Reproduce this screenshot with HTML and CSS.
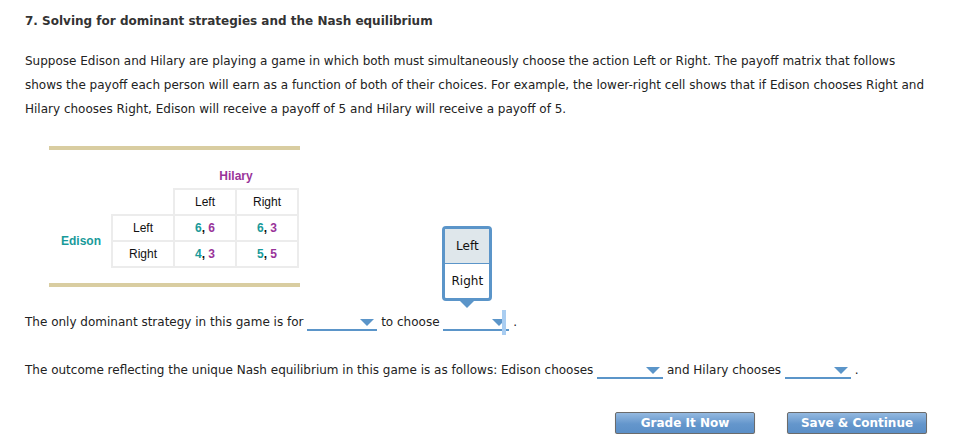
FILE: index.html
```html
<!DOCTYPE html>
<html>
<head>
<meta charset="utf-8">
<link rel="stylesheet" href="styles.css">
</head>
<body>
<div class="page">
  <h1 class="title">7. Solving for dominant strategies and the Nash equilibrium</h1>
  <p class="intro">Suppose Edison and Hilary are playing a game in which both must simultaneously choose the action Left or Right. The payoff matrix that follows shows the payoff each person will earn as a function of both of their choices. For example, the lower-right cell shows that if Edison chooses Right and Hilary chooses Right, Edison will receive a payoff of 5 and Hilary will receive a payoff of 5.</p>

  <div class="matrix">
    <table class="payoff">
      <tr class="r-player">
        <td class="blank"></td>
        <td class="blank"></td>
        <td class="blank hilary" colspan="2">Hilary</td>
      </tr>
      <tr>
        <td class="blank"></td>
        <td class="blank"></td>
        <td class="cell">Left</td>
        <td class="cell">Right</td>
      </tr>
      <tr>
        <td class="blank edison" rowspan="2">Edison</td>
        <td class="cell">Left</td>
        <td class="cell num"><span class="t">6</span>, <span class="p">6</span></td>
        <td class="cell num"><span class="t">6</span>, <span class="p">3</span></td>
      </tr>
      <tr>
        <td class="cell">Right</td>
        <td class="cell num"><span class="t">4</span>, <span class="p">3</span></td>
        <td class="cell num"><span class="t">5</span>, <span class="p">5</span></td>
      </tr>
    </table>
  </div>

  <p class="q q1">The only dominant strategy in this game is for <span class="dd"><span class="arrow"></span></span> to choose <span class="dd dd-open"><span class="arrow"></span><span class="focus"></span><span class="menu"><span class="opt opt-hover">Left</span><span class="opt">Right</span><span class="tip"></span></span></span> .</p>

  <p class="q q2">The outcome reflecting the unique Nash equilibrium in this game is as follows: Edison chooses <span class="dd"><span class="arrow"></span></span> and Hilary chooses <span class="dd"><span class="arrow"></span></span> .</p>

  <div class="actions">
    <button class="btn">Grade It Now</button>
    <button class="btn">Save &amp; Continue</button>
  </div>
</div>
</body>
</html>
```

FILE: styles.css
```css
html, body {
  margin: 0;
  padding: 0;
  background: #ffffff;
}

.page {
  padding: 13px 25px 0 25px;
  font-family: "DejaVu Sans", Verdana, sans-serif;
  font-size: 12px;
  color: #222222;
}

.title {
  margin: 0 0 20px 0;
  font-size: 12px;
  line-height: 16px;
  font-weight: bold;
  color: #333333;
}

.intro {
  margin: 0;
  width: 905px;
  line-height: 24px;
}

.matrix {
  margin: 25px 0 0 24px;
  width: 251px;
  border-top: 4px solid #d9cda1;
  border-bottom: 4px solid #d9cda1;
  padding: 13px 0 15px 12px;
  box-sizing: border-box;
}

.payoff {
  border-collapse: collapse;
  font-family: "Liberation Sans", Arial, sans-serif;
  font-size: 12px;
  color: #111111;
}

.payoff td {
  padding: 0;
  text-align: center;
  height: 24px;
}

.payoff .blank {
  border: none;
}

.payoff .cell {
  border: 2px solid #ececec;
  height: 24px;
}

.payoff td:nth-child(1) { width: 50px; }

.r-player td { height: 25px; }

.payoff tr:nth-child(2) td:nth-child(2) { width: 61px; }
.payoff tr:nth-child(2) td:nth-child(3),
.payoff tr:nth-child(2) td:nth-child(4) { width: 60px; }

.hilary {
  color: #993399;
  font-weight: bold;
  vertical-align: middle;
}

.edison {
  color: #199a9a;
  font-weight: bold;
  text-align: left !important;
}

.num { font-weight: bold; }
.t { color: #199a9a; }
.p { color: #993399; }

.q {
  margin: 0;
  line-height: 24px;
}

.q1 { margin-top: 23px; }
.q2 { margin-top: 24px; }

.dd {
  position: relative;
  display: inline-block;
  width: 66px;
  height: 16px;
  border-bottom: 2px solid #5b95c9;
  vertical-align: -5px;
}

.q1 .dd:first-child { width: 70px; }

.arrow {
  position: absolute;
  right: 3px;
  bottom: 3px;
  width: 0;
  height: 0;
  border-left: 7px solid transparent;
  border-right: 7px solid transparent;
  border-top: 7px solid #5b95c9;
}

.focus {
  position: absolute;
  left: 59px;
  top: -3px;
  width: 4px;
  height: 25px;
  background: #a9cdf1;
}

.menu {
  position: absolute;
  left: -1px;
  top: -87px;
  width: 50px;
  border: 3px solid #5b95c9;
  border-radius: 4px;
  background: #ffffff;
  box-sizing: border-box;
  display: flex;
  flex-direction: column;
  font-size: 12px;
  line-height: 34px;
  color: #111111;
  text-align: center;
}

.opt {
  display: block;
  height: 34px;
}

.opt-hover {
  background: #dfe7eb;
  border-bottom: 1px solid #5b95c9;
}

.tip {
  position: absolute;
  left: 50%;
  bottom: -10px;
  margin-left: -7px;
  width: 0;
  height: 0;
  border-left: 7px solid transparent;
  border-right: 7px solid transparent;
  border-top: 7px solid #5b95c9;
}

.actions {
  margin-top: 30px;
  width: 902px;
  display: flex;
  justify-content: flex-end;
  gap: 32px;
}

.btn {
  width: 140px;
  height: 22px;
  padding: 0;
  border: 1px solid #6b6b6b;
  border-radius: 2px;
  background: linear-gradient(#94b9e0, #6496cc 55%, #5b8fc7);
  color: #ffffff;
  font-family: "DejaVu Sans", Verdana, sans-serif;
  font-size: 12px;
  font-weight: bold;
  box-shadow: 0 1px 1px rgba(0,0,0,0.25);
}
```
